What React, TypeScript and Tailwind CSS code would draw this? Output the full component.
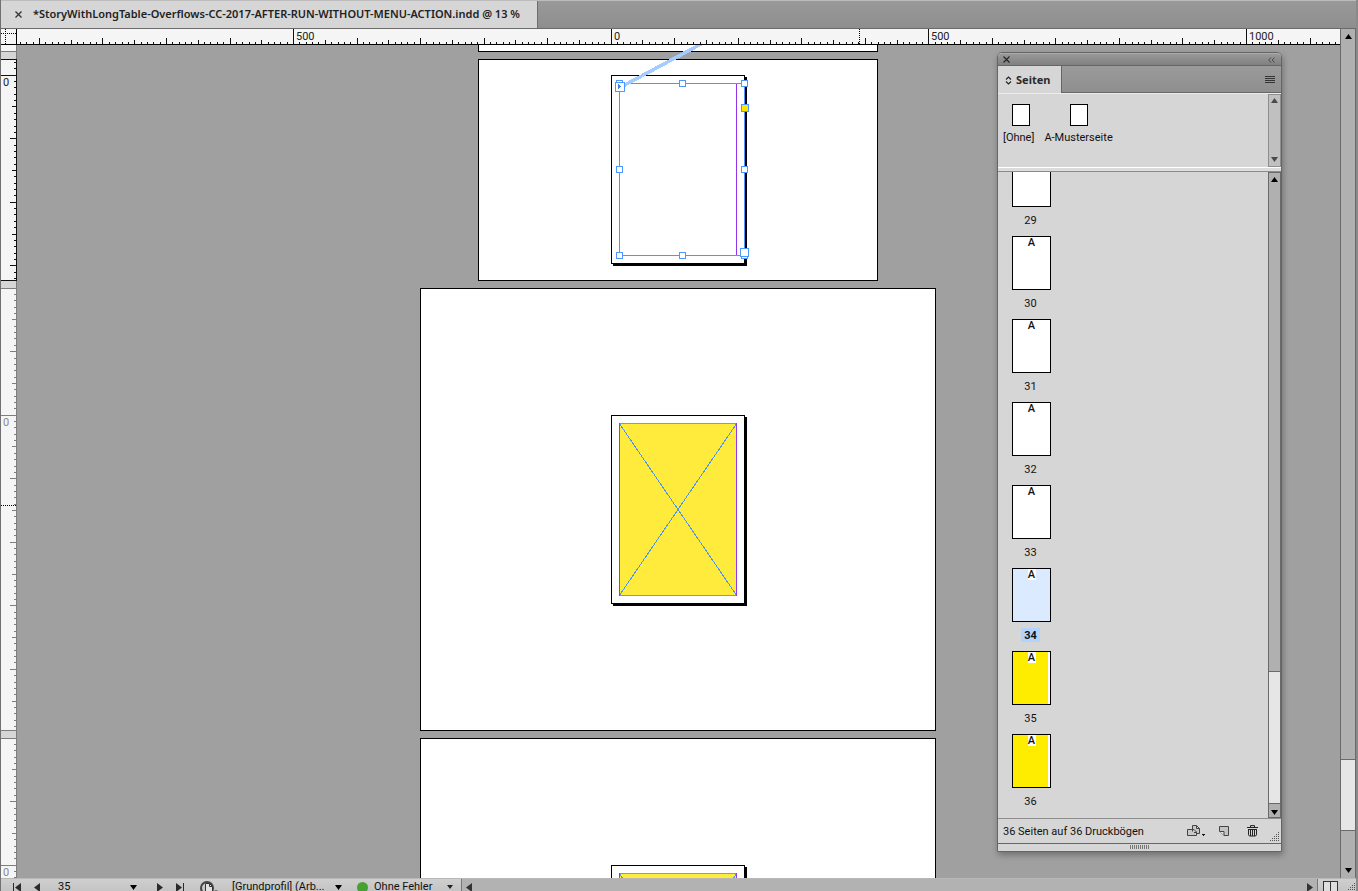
import type { ReactNode } from "react";

const UNIT = 6.353;

type Tick = { at: number; len: number };

function makeTicks(origin: number, from: number, to: number): Tick[] {
  const ticks: Tick[] = [];
  for (let k = Math.ceil((from - origin) / UNIT); k <= (to - origin) / UNIT; k++) {
    const at = Math.floor(origin + k * UNIT);
    ticks.push({ at, len: k % 10 === 0 ? 6 : k % 5 === 0 ? 4 : 2 });
  }
  return ticks;
}

function HorizontalRuler() {
  const ticks = makeTicks(594.2, 0, 2400);
  const labels = [
    { at: 276, text: "500" },
    { at: 594, text: "0" },
    { at: 911, text: "500" },
    { at: 1229, text: "1000" },
  ];
  return (
    <svg className="block h-4 min-w-0 flex-1 bg-[#f5f5f5]" shapeRendering="crispEdges" aria-label="Horizontales Lineal">
      {ticks.map((t) => (
        <rect key={t.at} x={t.at} y={15 - t.len} width="1" height={t.len} fill="#111" />
      ))}
      {labels.map((l) => (
        <g key={l.at}>
          <rect x={l.at} y="0" width="1" height="15" fill="#111" />
          <text x={l.at + 3} y="11" fontSize="11" fill="#222">
            {l.text}
          </text>
        </g>
      ))}
      <path d="M842.5 0V15" stroke="#000" strokeDasharray="1 1" />
      <rect x="0" y="15" width="100%" height="1" fill="#000" />
    </svg>
  );
}

const RULER_PARTS = [
  { from: 0, to: 6, origin: -420, active: false },
  { from: 14, to: 235, origin: 30, active: true },
  { from: 243, to: 685, origin: 370, active: false },
  { from: 693, to: 1135, origin: 820, active: false },
];

function VerticalRuler() {
  return (
    <svg className="block h-full w-4 shrink-0 bg-[#d6d6d6]" shapeRendering="crispEdges" aria-label="Vertikales Lineal">
      <rect x="15" y="0" width="1" height="100%" fill="#7a7a7a" />
      {RULER_PARTS.map((p) => {
        const ink = p.active ? "#111" : "#7d7d7d";
        return (
          <g key={p.from}>
            <rect x="0" y={p.from} width="15" height={p.to - p.from} fill="#f5f5f5" />
            {makeTicks(p.origin + 0.2, p.from + 2, p.to - 1).map((t) => (
              <rect key={t.at} x={15 - t.len} y={t.at} width={t.len} height="1" fill={ink} />
            ))}
            {p.from > 0 && <rect x="0" y={p.from} width="15" height="1" fill={ink} />}
            <rect x="0" y={p.to} width="15" height="1" fill={ink} />
            <rect x="15" y={p.from} width="1" height={p.to - p.from + 1} fill={ink} />
            {p.origin > 0 && (
              <>
                <rect x="0" y={p.origin} width="15" height="1" fill={ink} />
                <text x="2" y={p.origin + 11} fontSize="11" fill={p.active ? "#222" : "#8a8a8a"}>
                  0
                </text>
              </>
            )}
          </g>
        );
      })}
      <path d="M0 460.5H15" stroke="#000" strokeDasharray="1 1" />
    </svg>
  );
}

function PageSheet({ className, children }: { className: string; children?: ReactNode }) {
  return (
    <div className={`absolute h-[189px] w-[134px] border border-black bg-white shadow-[2px_2px_0_#000] ${className}`}>
      {children}
    </div>
  );
}

function YellowFrame() {
  return (
    <svg className="absolute left-[7px] top-[7px] block h-[173px] w-[118px]" viewBox="0 0 118 173" shapeRendering="crispEdges">
      <rect width="118" height="173" fill="#ffeb3b" />
      <path d="M0 0L118 173M118 0L0 173" stroke="#4f97e8" />
      <rect width="118" height="1" fill="#f05fd0" />
      <rect y="172" width="118" height="1" fill="#f05fd0" />
      <rect width="1" height="173" fill="#8f38f5" />
      <rect x="117" width="1" height="173" fill="#8f38f5" />
    </svg>
  );
}

const HANDLES = [
  [619, 83],
  [682, 83],
  [744, 83],
  [619, 169],
  [744, 169],
  [619, 255],
  [682, 255],
  [744, 255],
];

function TextFrameOverlay() {
  return (
    <svg className="pointer-events-none absolute inset-0 block h-full w-full">
      <g transform="translate(-17 -45)" shapeRendering="crispEdges" fill="none">
        <rect x="736" y="83" width="1" height="173" fill="#9333ea" />
        <rect x="619" y="83" width="126" height="1" fill="#4c98ff" />
        <rect x="619" y="255" width="126" height="1" fill="#4c98ff" />
        <rect x="619" y="83" width="1" height="173" fill="#4c98ff" />
        <rect x="744" y="83" width="1" height="173" fill="#4c98ff" />
        <path d="M621 87L703 43" stroke="#a6cbff" strokeWidth="3.5" />
        {HANDLES.map(([x, y]) => (
          <rect key={`${x}-${y}`} x={x - 2.5} y={y - 2.5} width="6" height="6" fill="#fff" stroke="#4c98ff" />
        ))}
        <rect x="615.5" y="82.5" width="9" height="9" fill="#fff" stroke="#4c98ff" />
        <path d="M618 84V89H619V88H620V87H621V86H620V85H619V84Z" fill="#3b82e6" />
        <rect x="741.5" y="104.5" width="7" height="7" fill="#ffe600" stroke="#4c98ff" />
        <rect x="740.5" y="248.5" width="8" height="8" fill="#fff" stroke="#4c98ff" />
      </g>
    </svg>
  );
}

function Arrow({ dir, className = "" }: { dir: "up" | "down" | "left" | "right"; className?: string }) {
  const d = {
    up: "M0 5H7L3.5 0Z",
    down: "M0 0H7L3.5 5Z",
    left: "M6 0V9L0 4.5Z",
    right: "M0 0V9L6 4.5Z",
  }[dir];
  const side = dir === "left" || dir === "right";
  return (
    <svg
      className={`block shrink-0 ${className}`}
      width={side ? 6 : 7}
      height={side ? 9 : 5}
      viewBox={side ? "0 0 6 9" : "0 0 7 5"}
      fill="currentColor"
    >
      <path d={d} />
    </svg>
  );
}

function Grip() {
  const dots: ReactNode[] = [];
  for (let r = 0; r < 5; r++)
    for (let c = 4 - r; c < 5; c++) dots.push(<rect key={`${r}${c}`} x={c * 2} y={r * 2} width="1" height="1" />);
  return (
    <svg className="block shrink-0" width="9" height="9" fill="#555" shapeRendering="crispEdges">
      {dots}
    </svg>
  );
}

const PAGES = [
  { n: 29, kind: "white", master: "" },
  { n: 30, kind: "white", master: "A" },
  { n: 31, kind: "white", master: "A" },
  { n: 32, kind: "white", master: "A" },
  { n: 33, kind: "white", master: "A" },
  { n: 34, kind: "selected", master: "A" },
  { n: 35, kind: "yellow", master: "A" },
  { n: 36, kind: "yellow", master: "A" },
];

const FILL: Record<string, string> = {
  white: "bg-white",
  selected: "bg-[#dbeaff]",
  yellow: "bg-linear-to-r from-[#ffed00] from-[35px] to-white to-[35px]",
};

function PagesPanel() {
  return (
    <section
      aria-label="Seiten"
      className="absolute bottom-[26px] right-[58px] top-[7px] flex w-[285px] flex-col rounded-t-[5px] border border-[#656565] bg-[#d6d6d6] shadow-[1px_3px_6px_rgba(0,0,0,0.3)]"
    >
      <header className="flex h-[13px] shrink-0 items-center justify-between rounded-t-[4px] border-b border-[#666] border-t border-t-[#aaa] bg-linear-to-b from-[#999] to-[#808080] pl-[5px] pr-[6px]">
        <button aria-label="Schließen">
          <svg className="block" width="7" height="7" stroke="#222" strokeWidth="1.1">
            <path d="M.5 .5L6.5 6.5M6.5 .5L.5 6.5" />
          </svg>
        </button>
        <button aria-label="Reduzieren">
          <svg className="block" width="7" height="6" stroke="#4a4a4a" fill="none">
            <path d="M3 .5L.7 3L3 5.5M6.5 .5L4.2 3L6.5 5.5" />
          </svg>
        </button>
      </header>
      <div className="flex h-[27px] shrink-0 bg-linear-to-b from-[#9b9b9b] to-[#8e8e8e]" role="tablist">
        <button role="tab" aria-selected="true" className="flex w-[64px] items-center gap-1 border-r border-[#666] bg-[#d6d6d6] pl-[7px] pt-px font-['Noto_Sans','Open_Sans',sans-serif] text-[11px] font-bold text-[#2a2a2a]">
          <svg className="block" width="7" height="9" fill="none" stroke="#222" strokeWidth="1.1">
            <path d="M1 3.5L3.5 1L6 3.5M1 5.5L3.5 8L6 5.5" />
          </svg>
          Seiten
        </button>
        <div className="flex flex-1 items-center justify-end border-b border-[#666] pr-[6px]">
          <button aria-label="Bedienfeldmenü">
            <svg className="block" width="10" height="7" fill="#333" shapeRendering="crispEdges">
              <path d="M0 0H10V1H0ZM0 2H10V3H0ZM0 4H10V5H0ZM0 6H10V7H0Z" />
            </svg>
          </button>
        </div>
      </div>
      <div className="flex h-[74px] shrink-0 border-t border-[#ececec]">
        <div className="flex flex-1 gap-[10px] pl-[5px] pt-[10px] text-[11px] leading-[14px] text-[#111]">
          <button className="flex flex-col items-start gap-[5px]">
            <span className="ml-[9px] h-[22px] w-[18px] border border-black bg-white" />
            [Ohne]
          </button>
          <button className="flex flex-col items-center gap-[5px]">
            <span className="h-[22px] w-[18px] border border-black bg-white" />
            A-Musterseite
          </button>
        </div>
        <div className="flex w-[13px] flex-col items-center justify-between border border-[#8e8e8e] bg-[#c0c0c0] pb-1 pt-[3px] text-[#4a4a4a]">
          <button aria-label="Nach oben">
            <Arrow dir="up" />
          </button>
          <button aria-label="Nach unten">
            <Arrow dir="down" />
          </button>
        </div>
      </div>
      <div className="h-[5px] shrink-0 border-b border-t border-b-[#8a8a8a] border-t-white bg-[#dcdcdc]" />
      <div className="flex min-h-0 flex-1">
        <ul className="flex min-h-0 flex-1 flex-col justify-end overflow-hidden pb-px text-[11px] text-[#111]">
          {PAGES.map((p) => (
            <li key={p.n} className="flex h-[83px] shrink-0 flex-col items-start pl-[14px]">
              <button className="flex flex-col items-center">
                <span className={`flex h-[54px] w-[39px] items-start justify-center border border-black ${FILL[p.kind]}`}>
                  <span className="h-[11px] w-2 bg-white text-center font-medium leading-[11px]">{p.master}</span>
                </span>
                <span
                  className={
                    p.kind === "selected"
                      ? "mr-[2px] mt-[6px] h-[14px] w-[19px] bg-[#b3d3ff] font-bold leading-[15px]"
                      : "mr-[2px] mt-[6px] h-[14px] w-[19px] leading-[16px]"
                  }
                >
                  {p.n}
                </span>
              </button>
            </li>
          ))}
        </ul>
        <div className="flex w-[13px] flex-col border border-[#6a6a6a] bg-[#b0b0b0] text-black">
          <button aria-label="Seiten nach oben" className="flex h-3 shrink-0 items-center justify-center">
            <Arrow dir="up" />
          </button>
          <div className="flex-1" />
          <div className="h-[133px] shrink-0 border-y border-[#6a6a6a] bg-[#e6e6e6]" />
          <button aria-label="Seiten nach unten" className="flex h-[13px] shrink-0 items-center justify-center pt-[3px]">
            <Arrow dir="down" />
          </button>
        </div>
      </div>
      <footer className="flex h-[25px] shrink-0 items-center border-t border-[#8e8e8e] pl-[5px] text-[11px] text-[#111]">
        <span className="flex-1 whitespace-nowrap pt-[3px]">36 Seiten auf 36 Druckbögen</span>
        <button aria-label="Seitenformat bearbeiten" className="mr-[14px]">
          <svg className="block" width="18" height="12" fill="none" stroke="#444">
            <path d="M.5 4.5H6.5L9.5 7.5V10.5H.5Z" fill="#c8c8c8" />
            <path d="M5.5 6.5V.5H9.5L12.5 3.5V8.5H9.5M9.5 .5V3.5H12.5" fill="#c8c8c8" />
            <path d="M5.5 4.5H7L9.5 7V8.5M7 7.5H9.5" />
            <path d="M15 9H18V10H17V11H16V10H15Z" fill="#111" stroke="none" />
          </svg>
        </button>
        <button aria-label="Neue Seite erstellen" className="mr-[17px]">
          <svg className="block" width="11" height="11" fill="#c4c4c4" stroke="#444">
            <path d="M.5 .5H9.5V9.5H5L.5 5Z" />
            <path d="M.5 5.5H5V9.5" fill="#e0e0e0" />
          </svg>
        </button>
        <button aria-label="Ausgewählte Seiten löschen" className="mr-3">
          <svg className="block" width="11" height="12" fill="none" stroke="#222">
            <path d="M0 2.5H11M3.5 2.5V.6H7.5V2.5M1.5 4.5H9.5M1.5 4V9.8L2.4 11H8.6L9.5 9.8V4M3.5 4.5V11M5.5 4.5V11M7.5 4.5V11" />
          </svg>
        </button>
        <div className="mr-[2px] self-end pb-[2px]">
          <Grip />
        </div>
      </footer>
      <div className="flex h-2 shrink-0 items-start justify-center border-t border-[#666] pt-px">
        <svg className="block" width="20" height="4" shapeRendering="crispEdges">
          <path d="M.5 0V4M2.5 0V4M4.5 0V4M6.5 0V4M8.5 0V4M10.5 0V4M12.5 0V4M14.5 0V4M16.5 0V4M18.5 0V4" stroke="#777" />
        </svg>
      </div>
    </section>
  );
}

function StatusBar() {
  return (
    <footer className="h-[13px] shrink-0 overflow-hidden border-t border-[#b8b8b8] bg-linear-to-b from-[#cfcfcf] to-[#c4c4c4] text-[11px] text-[#111]">
      <div className="flex h-4 items-center">
        <div className="flex w-[460px] shrink-0 items-center text-[#2b2b2b]">
          <button aria-label="Erste Seite" className="ml-3 flex">
            <span className="mr-px h-[9px] w-px bg-[#2b2b2b]" />
            <Arrow dir="left" />
          </button>
          <button aria-label="Vorherige Seite" className="ml-[13px]">
            <Arrow dir="left" />
          </button>
          <input aria-label="Seite" defaultValue="35" className="ml-[18px] h-4 w-[72px] bg-transparent text-[#111] outline-none" />
          <button aria-label="Seite wählen" className="text-black">
            <Arrow dir="down" />
          </button>
          <button aria-label="Nächste Seite" className="ml-5">
            <Arrow dir="right" />
          </button>
          <button aria-label="Letzte Seite" className="ml-[13px] flex">
            <Arrow dir="right" />
            <span className="ml-px h-[9px] w-px bg-[#2b2b2b]" />
          </button>
          <button aria-label="Dokumentstatus" className="ml-4">
            <svg className="block" width="18" height="14" fill="none">
              <circle cx="7" cy="8" r="6" stroke="#444" strokeWidth="2" />
              <path d="M5.5 3.5H9.5L12.5 6.5V12.5H5.5Z" fill="#e0e0e0" stroke="#333" />
              <path d="M9.5 3.5V6.5H12.5" stroke="#333" />
              <path d="M14.5 10.5H17.5V12H14.5Z" fill="#222" />
            </svg>
          </button>
          <select
            aria-label="Preflight-Profil"
            className="ml-[14px] h-4 w-[103px] appearance-none bg-transparent text-[#111] outline-none"
          >
            <option>[Grundprofil] (Arb...</option>
          </select>
          <Arrow dir="down" className="text-black" />
          <button className="ml-[15px] flex h-4 items-center whitespace-nowrap text-[#111]">
            <span className="mr-[6px] size-[11px] rounded-full bg-[#46a135]" />
            <span className="w-[73px] text-left leading-4">Ohne Fehler</span>
            <svg className="block" width="7" height="4" fill="#222">
              <path d="M0 0H6L3 4Z" />
            </svg>
          </button>
        </div>
        <div className="flex h-4 min-w-0 flex-1 items-center justify-between border-x border-[#777] bg-[#b2b2b2] px-1 text-[#333]">
          <button aria-label="Nach links">
            <Arrow dir="left" />
          </button>
          <button aria-label="Nach rechts">
            <Arrow dir="right" />
          </button>
        </div>
        <div className="flex w-[38px] shrink-0 items-center gap-2 pl-[5px]">
          <button aria-label="Fenster teilen">
            <svg className="block" width="15" height="12" fill="#dedede" stroke="#333" shapeRendering="crispEdges">
              <path d="M.5 .5H14.5V14H.5ZM7.5 0V12" />
            </svg>
          </button>
          <Grip />
        </div>
      </div>
    </footer>
  );
}

export default function App() {
  return (
    <div className="flex h-screen flex-col overflow-hidden border-l border-r-2 border-l-[#707070] border-r-[#8a8a8a] bg-[#a0a0a0] font-[Roboto,'Noto_Sans',sans-serif]">
      <div className="flex h-[29px] shrink-0 border-b border-t border-b-[#6a6a6a] border-t-[#bcbcbc] bg-linear-to-b from-[#999] to-[#8e8e8e]">
        <div className="flex items-center whitespace-nowrap border-r border-[#6e6e6e] bg-[#d6d6d6] pl-[14px] pr-[17px] font-['Noto_Sans','Open_Sans',sans-serif] text-[11px] font-semibold text-[#222]">
          <button aria-label="Dokument schließen" className="mr-[11px]">
            <svg className="block" width="7" height="7" stroke="#333" strokeWidth="1.3">
              <path d="M.5 .5L6.5 6.5M6.5 .5L.5 6.5" />
            </svg>
          </button>
          *StoryWithLongTable-Overflows-CC-2017-AFTER-RUN-WITHOUT-MENU-ACTION.indd @ 13 %
        </div>
      </div>
      <div className="flex min-h-0 flex-1">
        <main className="flex min-w-0 flex-1 flex-col">
          <div className="flex h-4 shrink-0">
            <svg className="block h-4 w-4 shrink-0 bg-[#f5f5f5]" stroke="#000" shapeRendering="crispEdges">
              <path d="M0 4.5H15M4.5 0V15" strokeDasharray="1 1" />
              <path d="M15.5 0V16M0 15.5H16" />
            </svg>
            <HorizontalRuler />
          </div>
          <div className="flex min-h-0 flex-1">
            <VerticalRuler />
            <div className="relative min-w-0 flex-1 overflow-hidden bg-[#a0a0a0]">
              <div className="absolute left-[461px] top-0 h-[7px] w-[400px] border border-t-0 border-black bg-white" />
              <div className="absolute left-[461px] top-[14px] h-[222px] w-[400px] border border-black bg-white">
                <PageSheet className="left-[132px] top-[15px]" />
              </div>
              <div className="absolute left-[403px] top-[243px] h-[443px] w-[516px] border border-black bg-white">
                <PageSheet className="left-[190px] top-[126px]">
                  <YellowFrame />
                </PageSheet>
              </div>
              <div className="absolute left-[403px] top-[693px] h-[443px] w-[516px] border border-black bg-white">
                <PageSheet className="left-[190px] top-[126px]">
                  <YellowFrame />
                </PageSheet>
              </div>
              <TextFrameOverlay />
              <PagesPanel />
            </div>
          </div>
        </main>
        <div className="flex w-4 shrink-0 flex-col border-x border-[#6a6a6a] bg-[#b0b0b0] text-black">
          <button aria-label="Dokument nach oben" className="flex h-[15px] shrink-0 items-center justify-center">
            <Arrow dir="up" />
          </button>
          <div className="flex-1" />
          <div className="mb-[31px] h-[72px] shrink-0 border-y border-[#6a6a6a] bg-[#e6e6e6]" />
          <button aria-label="Dokument nach unten" className="flex h-4 shrink-0 items-center justify-center">
            <Arrow dir="down" />
          </button>
        </div>
      </div>
      <StatusBar />
    </div>
  );
}
